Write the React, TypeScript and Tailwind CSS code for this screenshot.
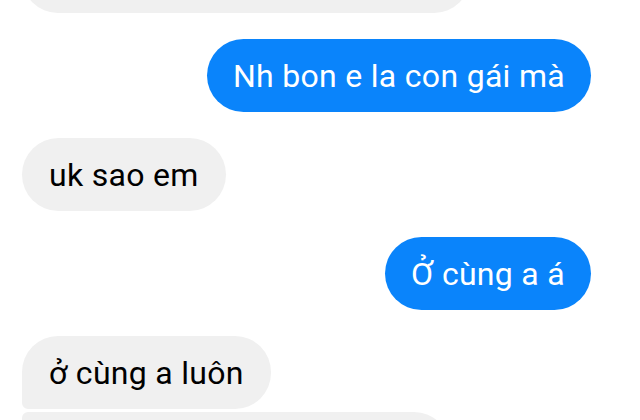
import React from "react";

const font = { fontFamily: "Roboto, 'Noto Sans', 'Liberation Sans', sans-serif" };

export default function App() {
  return (
    <div
      className="w-[640px] h-[420px] overflow-hidden bg-white flex flex-col"
      style={font}
    >
      {/* top partially-visible incoming bubble */}
      <div className="pl-[22px] -mt-[60px] flex">
        <div className="w-[448px] h-[73px] bg-[#f0f0f0] rounded-[36px]" />
      </div>

      {/* outgoing 1 */}
      <div className="mt-[26px] flex justify-end pr-[49px]">
        <div className="h-[73px] px-[26px] flex items-center bg-[#0a84fb] text-white rounded-full text-[32px] tracking-[0.3px] leading-none">
          Nh bon e la con gái mà
        </div>
      </div>

      {/* incoming */}
      <div className="mt-[26px] flex pl-[22px]">
        <div className="h-[73px] px-[27px] flex items-center bg-[#f0f0f0] text-black rounded-full text-[32px] tracking-[0.3px] leading-none">
          uk sao em
        </div>
      </div>

      {/* outgoing 2 */}
      <div className="mt-[26px] flex justify-end pr-[49px]">
        <div className="h-[73px] px-[26px] flex items-center bg-[#0a84fb] text-white rounded-full text-[32px] tracking-[0.3px] leading-none">
          Ở cùng a á
        </div>
      </div>

      {/* incoming group */}
      <div className="mt-[26px] flex flex-col items-start gap-[3px] pl-[22px]">
        <div className="h-[73px] px-[27px] flex items-center bg-[#f0f0f0] text-black rounded-tl-[36px] rounded-tr-[36px] rounded-br-[36px] rounded-bl-[6px] text-[32px] tracking-[0.3px] leading-none">
          ở cùng a luôn
        </div>
        <div className="w-[428px] h-[73px] bg-[#f0f0f0] rounded-tl-[6px] rounded-tr-[36px] rounded-br-[36px] rounded-bl-[36px]" />
      </div>
    </div>
  );
}
